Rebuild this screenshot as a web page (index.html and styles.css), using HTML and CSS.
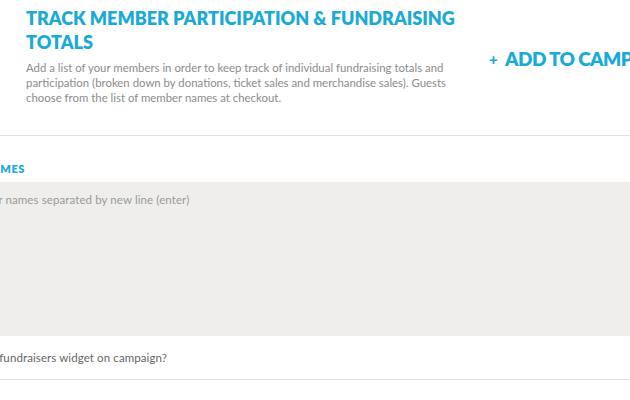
FILE: index.html
```html
<!DOCTYPE html>
<html>
<head>
<meta charset="utf-8">
<link rel="stylesheet" href="styles.css">
</head>
<body>
<div class="page">
  <section class="intro">
    <div class="intro-text">
      <h2 class="title">TRACK MEMBER PARTICIPATION &amp; FUNDRAISING TOTALS</h2>
      <p class="desc">Add a list of your members in order to keep track of individual fundraising totals and participation (broken down by donations, ticket sales and merchandise sales). Guests choose from the list of member names at checkout.</p>
    </div>
    <div class="intro-action">
      <a class="add-btn"><span class="plus">+</span>ADD TO CAMPAIGN</a>
    </div>
  </section>
  <section class="form">
    <label class="field-label">NAMES</label>
    <textarea class="names" placeholder="Enter names separated by new line (enter)"></textarea>
    <div class="check-row">
      <span class="check-text">Show fundraisers widget on campaign?</span>
    </div>
  </section>
</div>
</body>
</html>
```
FILE: styles.css
```css
html, body {
  margin: 0;
  padding: 0;
  background: #ffffff;
  overflow: hidden;
}
.page {
  width: 630px;
  font-family: "Lato", "Open Sans", sans-serif;
}
.intro {
  display: flex;
  padding: 6px 0 0 26px;
  height: 136px;
  box-sizing: border-box;
  border-bottom: 1px solid #e2e2e2;
}
.intro-text {
  width: 440px;
  flex: none;
}
.title {
  margin: 0;
  font-size: 18px;
  line-height: 24px;
  font-weight: 800;
  color: #1aaad8;
  letter-spacing: 0;
}
.desc {
  margin: 6px 0 0 0;
  font-size: 11.4px;
  line-height: 15px;
  color: #8c8c8c;
  width: 432px;
}
.intro-action {
  flex: none;
  padding-left: 23px;
  padding-top: 41px;
  white-space: nowrap;
}
.add-btn {
  display: inline-flex;
  align-items: center;
  font-size: 19px;
  font-weight: 800;
  color: #1aaad8;
  letter-spacing: -0.6px;
}
.plus {
  font-size: 15px;
  font-weight: 900;
  margin-right: 8px;
}
.form {
  margin-left: -17px;
  width: 700px;
}
.field-label {
  display: block;
  padding-top: 26px;
  font-size: 11px;
  line-height: 14px;
  font-weight: 800;
  color: #1aaad8;
  letter-spacing: 0.5px;
}
.names {
  display: block;
  margin: 6px 0 0 -8px;
  width: 720px;
  height: 154px;
  box-sizing: border-box;
  border: none;
  background: #efeeec;
  resize: none;
  padding: 11px 0 0 0;
  font-family: inherit;
  font-size: 11.5px;
  letter-spacing: 0.1px;
  color: #999;
  outline: none;
}
.names::placeholder {
  color: #9a9a9a;
}
.check-row {
  height: 44px;
  box-sizing: border-box;
  border-bottom: 1px solid #e2e2e2;
  display: flex;
  align-items: center;
  margin-left: -15px;
}
.check-text {
  font-size: 11.5px;
  letter-spacing: 0.1px;
  color: #666;
}
```
